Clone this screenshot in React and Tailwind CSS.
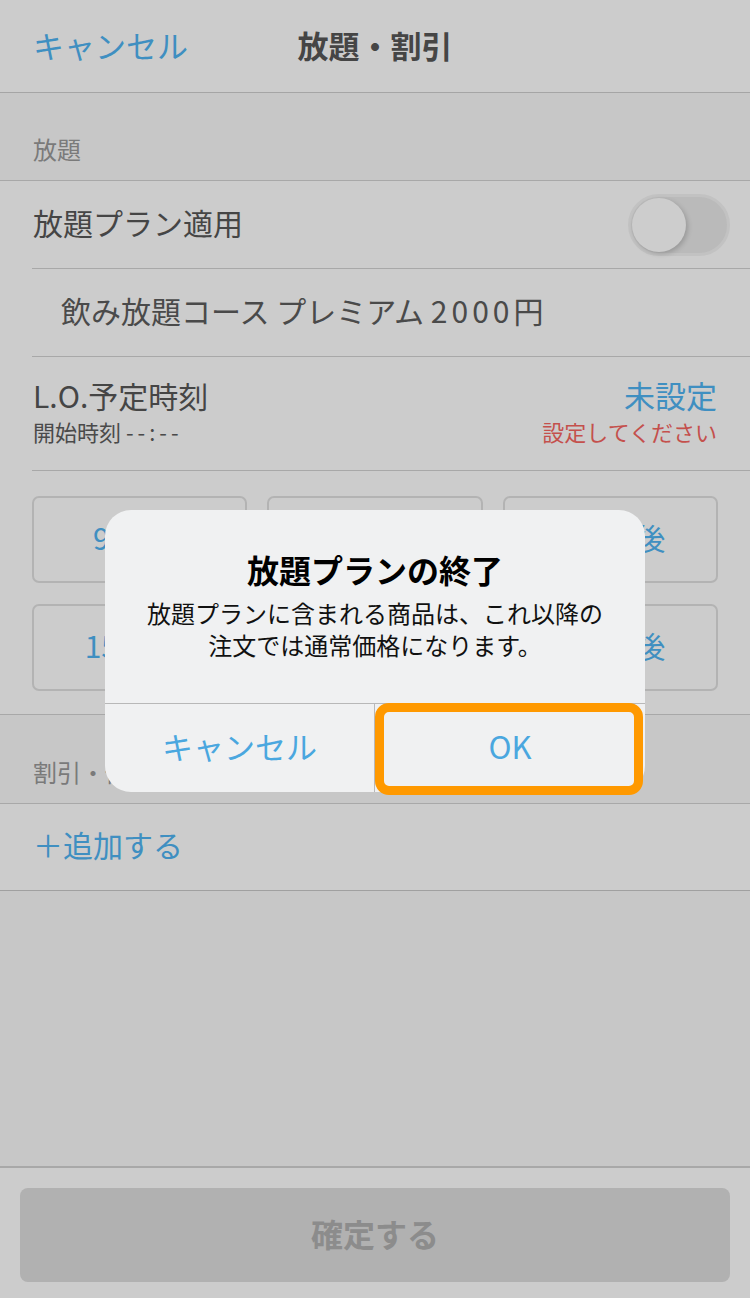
import React from "react";

function Toggle() {
  return (
    <div className="relative w-[102px] h-[62px] rounded-full bg-[#bababa] border-[3px] border-[#c2c2c2]">
      <div className="absolute left-[1px] top-[1px] w-[54px] h-[54px] rounded-full bg-[#cdcdcd] shadow-[2px_2px_5px_rgba(0,0,0,0.18)]" />
    </div>
  );
}

const presets = ["90分後", "105分後", "120分後", "150分後", "165分後", "180分後"];

export default function App() {
  return (
    <div className="relative w-[750px] h-[1298px] overflow-hidden bg-[#c7c7c7] font-['Noto_Sans_CJK_JP',sans-serif] text-[#454545]">
      <div className="flex flex-col h-full">
        {/* Header */}
        <div className="grid grid-cols-[1fr_auto_1fr] items-center h-[93px] bg-[#cccccc] border-b border-[#a5a5a5]">
          <div className="pl-[33px] pb-[2px] text-[31px] leading-[40px] text-[#3f8fc1]">キャンセル</div>
          <div className="pb-[2px] text-[31px] leading-[40px] font-bold text-[#454545]">放題・割引</div>
          <div />
        </div>

        {/* Section header */}
        <div className="h-[88px] flex items-end pl-[33px] pb-[17px] border-b border-[#a8a8a8]">
          <span className="text-[24px] leading-[28px] text-[#7a7a7a]">放題</span>
        </div>

        {/* Rows */}
        <div className="bg-[#cccccc] border-b border-[#a8a8a8]">
          <div className="ml-[32px]">
            <div className="h-[88px] flex items-center justify-between pr-[20px] border-b border-[#a8a8a8]">
              <span className="text-[30px] leading-[40px] pl-[1px] pb-[6px]">放題プラン適用</span>
              <Toggle />
            </div>
            <div className="h-[88px] flex items-center pl-[29px] pb-[6px] border-b border-[#a8a8a8]">
              <span className="text-[30px] leading-[40px] text-[#4a4a4a]">
                飲み放題コース プレミアム <span className="tracking-[4px]">2000</span>円
              </span>
            </div>
            <div className="h-[114px] flex justify-between items-start pt-[19px] pr-[33px] border-b border-[#a8a8a8]">
              <div className="flex flex-col pl-[1px]">
                <span className="text-[30px] leading-[38px]">L.O.予定時刻</span>
                <span className="text-[22px] leading-[34px] text-[#4a4a4a]">
                  開始時刻 <span className="tracking-[4px]">--:--</span>
                </span>
              </div>
              <div className="flex flex-col items-end">
                <span className="text-[31px] leading-[38px] text-[#3f8fc1]">未設定</span>
                <span className="text-[22px] leading-[34px] text-[#c4504c]">設定してください</span>
              </div>
            </div>
            <div className="grid grid-cols-3 gap-x-[20px] gap-y-[21px] pt-[25px] pb-[23px] pr-[32px]">
              {presets.map((p) => (
                <div
                  key={p}
                  className="h-[87px] flex items-center justify-center pb-[4px] rounded-[7px] border-2 border-[#b3b3b3] text-[30px] text-[#3f8fc1]"
                >
                  {p}
                </div>
              ))}
            </div>
          </div>
        </div>

        {/* Section header 2 */}
        <div className="h-[89px] flex items-end pl-[33px] pb-[17px] border-b border-[#a8a8a8]">
          <span className="text-[24px] leading-[28px] text-[#7a7a7a]">割引・値引</span>
        </div>

        <div className="h-[87px] flex items-center pl-[33px] pb-[6px] bg-[#cccccc] border-b border-[#a0a0a0]">
          <span className="text-[30px] leading-[40px] text-[#3f8fc1]">＋追加する</span>
        </div>

        <div className="flex-1 border-b-2 border-[#a8a8a8]" />

        {/* Footer */}
        <div className="h-[130px] bg-[#cccccc] px-[20px] pt-[20px]">
          <div className="h-[94px] rounded-[8px] bg-[#b1b1b1] flex items-center justify-center pb-[4px]">
            <span className="text-[32px] font-bold text-[#8c8c8c]">確定する</span>
          </div>
        </div>
      </div>

      {/* Alert dialog */}
      <div className="absolute inset-0 flex items-center justify-center pt-[4px]">
        <div className="w-[540px] rounded-[26px] bg-[#f0f1f2] flex flex-col">
          <div className="flex flex-col items-center pt-[39px] pb-[42px]">
            <div className="text-[32px] leading-[40px] font-bold text-black">放題プランの終了</div>
            <div className="mt-[8px] text-[24px] leading-[32px] text-[#111111] text-center">
              放題プランに含まれる商品は、これ以降の
              <br />
              注文では通常価格になります。
            </div>
          </div>
          <div className="grid grid-cols-2 h-[89px] border-t border-[#b8b8b8]">
            <div className="flex items-center justify-center pb-[4px] border-r border-[#b8b8b8] text-[31px] text-[#4aa7df]">
              キャンセル
            </div>
            <div className="relative flex items-center justify-center pb-[4px] text-[31px] text-[#4aa7df]">
              OK
              <div className="absolute left-[0px] right-[2px] top-[-1px] bottom-[-3px] rounded-[14px] border-[9px] border-[#ff9900]" />
            </div>
          </div>
        </div>
      </div>
    </div>
  );
}
